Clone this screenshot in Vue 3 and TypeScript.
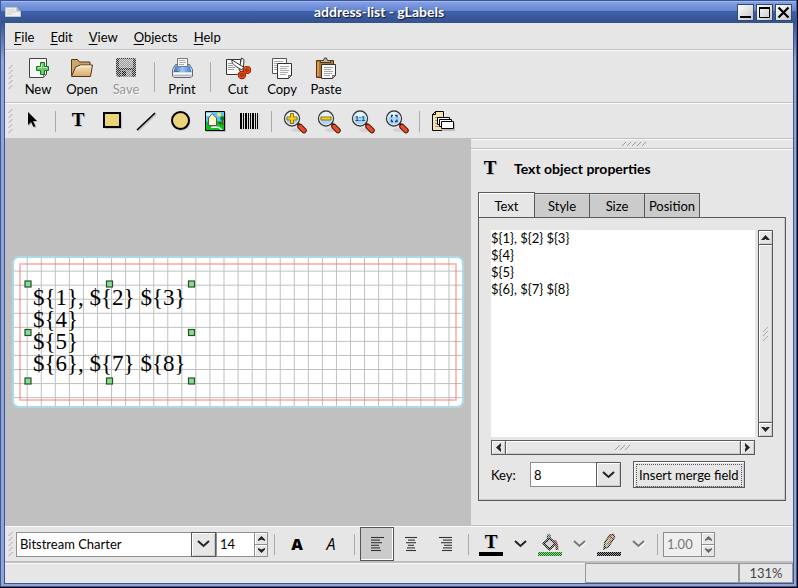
<script setup lang="ts">
import { ref } from 'vue'

const menus = [
  ['F', 'ile'],
  ['E', 'dit'],
  ['V', 'iew'],
  ['O', 'bjects'],
  ['H', 'elp'],
]

const tabs = ['Text', 'Style', 'Size', 'Position']
const activeTab = ref('Text')

const content = ref('${1}, ${2} ${3}\n${4}\n${5}\n${6}, ${7} ${8}')
const keyField = ref('8')
const family = ref('Bitstream Charter')
const fontSize = ref('14')
const lineWidth = ref('1.00')
const alignment = ref('left')

const gridStep = 14.056
const columns = Array.from({ length: 31 }, (_, i) => 13.16 + gridStep * (i + 1))
const rows = Array.from({ length: 10 }, (_, i) => 257.06 + gridStep * (i + 1))
const labelLines = ['${1}, ${2} ${3}', '${4}', '${5}', '${6}, ${7} ${8}']
const handles = [
  [28, 284], [109.5, 284], [191.5, 284],
  [28, 332.5], [191.5, 332.5],
  [28, 381], [109.5, 381], [191.5, 381],
]
const bars = [
  [4, 2], [7, 1], [9, 2], [12, 1], [14, 1], [16, 2], [19, 1], [21, 1],
]
const alignIcons: Record<string, number[][]> = {
  left: [[6, 13], [6, 9], [6, 11], [6, 8], [6, 9], [6, 10]],
  center: [[6, 12], [9, 7], [7, 10], [9, 6], [8, 8], [7, 10]],
  right: [[6, 13], [10, 9], [8, 11], [11, 8], [10, 9], [9, 10]],
}
</script>

<template>
  <div class="desktop">
    <div class="frame">
      <header class="titlebar">
        <svg class="app-icon" width="16" height="10" viewBox="0 0 16 10">
          <path d="M.5.5h11l4 4v5H.5z" fill="#eee" stroke="#c6c6c0" />
          <path d="M2 3h8M2 5h9M2 7h5" stroke="#cfcfcf" />
          <path d="M11.500.5v4h4z" fill="#aaa" />
        </svg>
        <h1>address-list - gLabels</h1>
        <div class="window-buttons">
          <button type="button" aria-label="Minimize">
            <svg width="15" height="15" viewBox="0 0 15 15"><path d="M2 12h11" stroke="#000" stroke-width="2" /></svg>
          </button>
          <button type="button" aria-label="Maximize">
            <svg width="15" height="15" viewBox="0 0 15 15">
              <path d="M2.500 3v9.500h10V3" fill="none" stroke="#000" /><path d="M2 3h11" stroke="#000" stroke-width="2" />
            </svg>
          </button>
          <button type="button" aria-label="Close">
            <svg width="15" height="15" viewBox="0 0 15 15"><path d="M2.500 2.500l10 10M12.500 2.500l-10 10" stroke="#000" stroke-width="2.200" /></svg>
          </button>
        </div>
      </header>

      <div class="body">
        <nav class="menubar">
          <button v-for="m in menus" :key="m[0]" type="button"><u>{{ m[0] }}</u>{{ m[1] }}</button>
        </nav>

        <div class="toolbar main-tools">
          <svg class="grip" width="10" height="28" viewBox="0 0 10 28"><path v-for="n in 5" :key="n" :d="`M3.500 ${n * 5 + 1}l4-4`" stroke="#aaa" /></svg>
          <button type="button" class="labelled">
            <svg class="icon" viewBox="0 0 24 24">
              <path d="M3.500 2.500h17v16l-3 3h-14z" fill="#f6f6f6" stroke="#444" />
              <path d="M20.500 18.500h-3v3z" fill="#ccc" stroke="#777" />
              <path d="M14.500 6.500h4v4h4v4h-4v4h-4v-4h-4v-4h4z" fill="#6ccc6c" stroke="#14781c" />
              <path d="M15.500 8v3.500H12M17.500 11.500H21" fill="none" stroke="#c6f4c0" />
            </svg>
            <span>New</span>
          </button>
          <button type="button" class="labelled">
            <svg class="icon" viewBox="0 0 24 24">
              <defs><linearGradient id="folder" x2="0" y2="1"><stop stop-color="#fbe6c0" /><stop offset="1" stop-color="#d8a868" /></linearGradient></defs>
              <path d="M1.500 19.500v-16h6l2 2.500h10.500v4" fill="#cfa46c" stroke="#4d3820" />
              <path d="M1.500 20.500L5.500 11l5-2h12l-2 11.500z" fill="url(#folder)" stroke="#4d3820" />
              <path d="M6.500 12l4.500-2h10" fill="none" stroke="#fff2d8" />
            </svg>
            <span>Open</span>
          </button>
          <button type="button" class="labelled" disabled>
            <svg class="icon" viewBox="0 0 24 24">
              <defs>
                <pattern id="stipple" width="2" height="2" patternUnits="userSpaceOnUse"><path d="M0 0h1v1H0zM1 1h1v1H1z" fill="#e6e6e6" /></pattern>
              </defs>
              <path d="M2 3l1-1h18l1 1v17l-1 1H4l-2-2z" fill="#303038" />
              <path d="M5 3h14v9H5z" fill="#999" />
              <path d="M7 14h11v7H7z" fill="#888" /><path d="M8 15h4v5H8z" fill="#111" />
              <path d="M2 2h20v19H2z" fill="url(#stipple)" opacity=".8" />
            </svg>
            <span>Save</span>
          </button>
          <i class="sep tall"></i>
          <button type="button" class="labelled">
            <svg class="icon" viewBox="0 0 24 24">
              <defs><linearGradient id="ink" x2="1"><stop stop-color="#2f6fd0" /><stop offset=".5" stop-color="#9cc8f6" /><stop offset="1" stop-color="#3b79d8" /></linearGradient></defs>
              <path d="M5.500 8.500h14l3 5v6.500l-1.500 1.500H4L2.500 20v-6.500z" fill="#dcdce4" stroke="#666" />
              <path d="M5.500 9.500h14l2 6.500h-18z" fill="url(#ink)" />
              <path d="M7.500 10.500v-8h10v8z" fill="#fafafa" stroke="#777" />
              <path d="M9 4.500h6M9 6.500h7M9 8.500h5" stroke="#aaa" />
              <path d="M3 17.500h19" stroke="#fff" /><path d="M5 15.500h2" stroke="#e03030" /><path d="M7 15.500h2" stroke="#30a030" />
              <path d="M4 19.500h17" stroke="#b6b6c0" />
            </svg>
            <span>Print</span>
          </button>
          <i class="sep tall"></i>
          <button type="button" class="labelled">
            <svg class="icon" viewBox="0 0 24 24">
              <path d="M.5 3.500h14v12l-3 3H.5z" fill="#fafafa" stroke="#333" />
              <path d="M2 7.500h4M2 9.500h5M2 11.500h7M2 13.500h6" stroke="#999" />
              <path d="M15.500 2l2.500 1.500L17 17l-4-3z" fill="#fff" stroke="#333" />
              <path d="M6 4c-.5 3 1 5 9 9.500l4-1.500z" fill="#fff" stroke="#333" />
              <circle cx="16" cy="19" r="2.500" fill="#e0a090" stroke="#6c1404" stroke-width="3.400" />
              <circle cx="21" cy="14" r="2.400" fill="#e0a090" stroke="#6c1404" stroke-width="3.400" />
              <circle cx="16" cy="19" r="2.600" fill="none" stroke="#ec480c" stroke-width="1.800" />
              <circle cx="21" cy="14" r="2.500" fill="none" stroke="#ec480c" stroke-width="1.800" />
            </svg>
            <span>Cut</span>
          </button>
          <button type="button" class="labelled">
            <svg class="icon" viewBox="0 0 24 24">
              <path d="M2.500 2.500h14v15h-14z" fill="#fafafa" stroke="#555" />
              <path d="M4 5.500h9M4 7.500h10M4 9.500h4M4 11.500h3M4 13.500h4" stroke="#aaa" />
              <path d="M7.500 7.500h14v12l-3 3h-11z" fill="#fafafa" stroke="#333" />
              <path d="M21.500 19.500h-3v3z" fill="#bbb" stroke="#444" stroke-width=".7" />
              <path d="M10 10.500h9M10 12.500h7M10 14.500h9M10 16.500h8M10 18.500h6" stroke="#aaa" />
            </svg>
            <span>Copy</span>
          </button>
          <button type="button" class="labelled">
            <svg class="icon" viewBox="0 0 24 24">
              <path d="M2.500 4.500h17v17h-17z" fill="#b87428" stroke="#5a3008" />
              <path d="M4 6v14" stroke="#d89a50" stroke-width="2" />
              <path d="M6.500 6.500V4.500h3l1-2.500h2l1 2.500h3v2z" fill="#b4b4ac" stroke="#3c3c38" />
              <path d="M7.500 8.500h14v11l-3 3h-11z" fill="#fafafa" stroke="#333" />
              <path d="M21.500 19.500h-3v3z" fill="#bbb" stroke="#444" stroke-width=".7" />
              <path d="M10 11.500h9M10 13.500h7M10 15.500h9M10 17.500h8M10 19.500h6" stroke="#aaa" />
            </svg>
            <span>Paste</span>
          </button>
        </div>

        <div class="toolbar">
          <svg class="grip" width="10" height="28" viewBox="0 0 10 28"><path v-for="n in 5" :key="n" :d="`M3.500 ${n * 5 + 1}l4-4`" stroke="#aaa" /></svg>
          <button type="button" class="tool" aria-label="Select">
            <svg class="icon" viewBox="0 0 24 24">
              <path d="M9 4v13l3-3 2.500 5.500 2-1-2.500-5.500h4z" fill="#bbb" />
              <path d="M8 3v13l3-3 2.500 5 2-1-2.500-5h4z" fill="#000" />
            </svg>
          </button>
          <i class="sep"></i>
          <button type="button" class="tool" aria-label="Text">
            <svg class="icon" viewBox="0 0 24 24">
              <text x="13" y="18" class="glyph-t faded">T</text>
              <text x="12" y="17" class="glyph-t">T</text>
            </svg>
          </button>
          <button type="button" class="tool" aria-label="Box">
            <svg class="icon" viewBox="0 0 24 24">
              <path d="M5 5h17v15H5z" fill="#c4c4c4" /><path d="M4 4h16v14H4z" fill="#ecd47c" stroke="#000" stroke-width="2" />
            </svg>
          </button>
          <button type="button" class="tool" aria-label="Line">
            <svg class="icon" viewBox="0 0 24 24">
              <path d="M4 22L22 5" stroke="#c4c4c4" stroke-width="2" /><path d="M3 21L21 4" stroke="#000" stroke-width="1.600" />
            </svg>
          </button>
          <button type="button" class="tool" aria-label="Ellipse">
            <svg class="icon" viewBox="0 0 24 24">
              <circle cx="13.500" cy="13" r="9" fill="#c4c4c4" /><circle cx="12.500" cy="11.500" r="8.500" fill="#ecd47c" stroke="#000" stroke-width="2" />
            </svg>
          </button>
          <button type="button" class="tool" aria-label="Image">
            <svg class="icon" viewBox="0 0 24 24">
              <path d="M4 4h20v19H4z" fill="#bbb" />
              <path d="M3.500 2.500h19v19h-19z" fill="#5cc4fc" />
              <path d="M4 4h6v3H4z" fill="#e4f8ff" />
              <path d="M4 13l6-2 12 2v8H4z" fill="#0cc01c" />
              <path d="M6.500 16.500V9l3.500-4.500L14.500 9v7.500z" fill="#fcf4c0" stroke="#555" />
              <path d="M9 12h2v4H9z" fill="#fff" />
              <circle cx="17" cy="5.500" r="2" fill="#fce83c" />
              <path d="M9 18.500l3-.5 5 .5 3 2.500" fill="none" stroke="#fff" stroke-width="1.500" />
              <circle cx="20.500" cy="9.500" r="2.300" fill="#0a7a14" /><path d="M20.500 11v5" stroke="#803c14" stroke-width="1.500" />
              <circle cx="18" cy="14" r="1.500" fill="#0a7a14" />
              <path d="M3.500 2.500h19v19h-19z" fill="none" stroke="#000" />
            </svg>
          </button>
          <button type="button" class="tool" aria-label="Barcode">
            <svg class="icon" viewBox="0 0 24 24">
              <path d="M5 5h19v16H5z" fill="#dadada" />
              <rect v-for="b in bars" :key="b[0]" :x="b[0]" y="4" :width="b[1]" height="16" fill="#000" />
            </svg>
          </button>
          <i class="sep"></i>
          <button v-for="kind in ['in', 'out', 'one', 'fit']" :key="kind" type="button" class="tool" :aria-label="'Zoom ' + kind">
            <svg class="icon" viewBox="0 0 24 24">
              <ellipse cx="16" cy="21" rx="7" ry="2" fill="#d2d2d2" />
              <path d="M15 14l4 4" stroke="#333" stroke-width="3" />
              <path d="M18 17.500l4 4" stroke="#5c1408" stroke-width="5.500" stroke-linecap="round" />
              <path d="M18 17.500l4 4" stroke="#e4502c" stroke-width="3.500" stroke-linecap="round" />
              <circle cx="10" cy="9.500" r="7.500" fill="#a4d8fc" stroke="#3c3c3c" stroke-width="1.400" />
              <circle cx="10" cy="9.500" r="6.300" fill="none" stroke="#e8e8e8" />
              <path d="M5 8a5 5 0 0 1 10 0z" fill="#e2f4ff" />
              <path v-if="kind === 'in'" d="M8.500 4.500h3v3.500H15v3h-3.500v3.500h-3V11H5V8h3.500z" fill="#fcd018" stroke="#94700c" />
              <path v-if="kind === 'out'" d="M5 8h10v3H5z" fill="#fcd018" stroke="#94700c" />
              <text v-if="kind === 'one'" x="10" y="12" class="ratio">1:1</text>
              <path v-if="kind === 'fit'" d="M7.500 8.500v-2H9M11 6.500h2v2M13 10.500v2h-2M9 12.500H7.500v-2" fill="none" stroke="#123c78" stroke-width="1.300" />
            </svg>
          </button>
          <i class="sep"></i>
          <button type="button" class="tool" aria-label="Merge properties">
            <svg class="icon wide" viewBox="0 0 26 24">
              <path d="M3.500 5.500l3-3h8v19h-11z" fill="#f4e4b0" stroke="#000" />
              <path d="M3.500 5.500h3v-3z" fill="#fff" stroke="#000" />
              <path d="M6 8.500h6M6 11.500h3M6 14.500h3M6 17.500h5" stroke="#a89868" />
              <path d="M8.500 8.500h12v7h-12z" fill="#fff" stroke="#000" />
              <path d="M10.500 10.500h12v7h-12z" fill="#fff" stroke="#000" />
              <path d="M13 14h13v8H13z" fill="#bbb" />
              <path d="M12.500 12.500h12v7h-12z" fill="#fff" stroke="#000" />
            </svg>
          </button>
        </div>

        <main class="work">
          <section class="canvas">
            <svg class="label" width="452" height="152" viewBox="12 256 452 152">
              <rect x="13" y="257" width="450" height="150" rx="6" fill="#fff" />
              <path v-for="x in columns" :key="'c' + x" :d="`M${x} 258V406`" stroke="#c0c0c0" />
              <path v-for="y in rows" :key="'r' + y" :d="`M14 ${y}H462`" stroke="#c0c0c0" />
              <rect x="20" y="264" width="436" height="136" fill="none" stroke="#ff5050" stroke-opacity=".5" stroke-width="1.500" />
              <rect x="13" y="257" width="450" height="150" rx="6" fill="none" stroke="#add8e6" stroke-width="2" />
              <text class="label-text" y="283"><tspan v-for="line in labelLines" :key="line" x="33" dy="22">{{ line }}</tspan></text>
              <rect v-for="h in handles" :key="h.join()" :x="h[0] - 3" :y="h[1] - 3" width="6" height="6" fill="#84e08c" stroke="#2c4c30" stroke-width="1.200" />
            </svg>
          </section>

          <aside class="panel">
            <div class="dock-grip">
              <svg width="26" height="6" viewBox="0 0 26 6"><path v-for="n in 5" :key="n" :d="`M${n * 5 - 4} 5l4-4`" stroke="#999" /></svg>
            </div>
            <div class="panel-head">
              <svg class="icon" viewBox="0 0 24 24">
                <text x="13" y="18" class="glyph-t faded">T</text>
                <text x="12" y="17" class="glyph-t">T</text>
              </svg>
              <h2>Text object properties</h2>
            </div>
            <div class="tabs" role="tablist">
              <button v-for="t in tabs" :key="t" type="button" role="tab" :aria-selected="t === activeTab" :class="{ on: t === activeTab }" @click="activeTab = t">{{ t }}</button>
            </div>
            <div class="page">
              <div class="editor">
                <textarea v-model="content" aria-label="Text" spellcheck="false"></textarea>
                <div class="scroll vertical">
                  <button type="button" aria-label="Scroll up"><svg width="9" height="9" viewBox="0 0 9 9"><path d="M4.500 2L9 7H6L4.500 6 3 7H0z" fill="#222" /></svg></button>
                  <div class="thumb"><svg width="7" height="16" viewBox="0 0 7 16"><path d="M1 6l5-5M1 10l5-5M1 15l5-5" stroke="#aaa" /></svg></div>
                  <button type="button" aria-label="Scroll down"><svg width="9" height="9" viewBox="0 0 9 9"><path d="M4.500 7L0 2h3l1.500 1L6 2h3z" fill="#222" /></svg></button>
                </div>
                <div class="scroll horizontal">
                  <button type="button" aria-label="Scroll left"><svg width="9" height="9" viewBox="0 0 9 9"><path d="M2 4.500L7 0v3L6 4.500 7 6v3z" fill="#222" /></svg></button>
                  <div class="thumb"><svg width="16" height="7" viewBox="0 0 16 7"><path d="M0 6l5-5M5 6l5-5M10 6l5-5" stroke="#999" /></svg></div>
                  <button type="button" aria-label="Scroll right"><svg width="9" height="9" viewBox="0 0 9 9"><path d="M7 4.500L2 9V6l1-1.500L2 3V0z" fill="#222" /></svg></button>
                </div>
              </div>
              <div class="merge-row">
                <label for="key">Key:</label>
                <div class="combo key-combo">
                  <select id="key" v-model="keyField"><option v-for="n in 8" :key="n">{{ n }}</option></select>
                  <span class="drop"><svg width="13" height="8" viewBox="0 0 13 8"><path d="M1 1l5.500 5L12 1" fill="none" stroke="#222" stroke-width="2" /></svg></span>
                </div>
                <button type="button" class="insert"><span>Insert merge field</span></button>
              </div>
            </div>
          </aside>
        </main>

        <div class="toolbar format">
          <svg class="grip" width="10" height="28" viewBox="0 0 10 28"><path v-for="n in 5" :key="n" :d="`M3.500 ${n * 5 + 1}l4-4`" stroke="#aaa" /></svg>
          <div class="combo font-combo">
            <select v-model="family" aria-label="Font family"><option>Bitstream Charter</option><option>Courier</option></select>
            <span class="drop"><svg width="13" height="8" viewBox="0 0 13 8"><path d="M1 1l5.500 5L12 1" fill="none" stroke="#222" stroke-width="2" /></svg></span>
          </div>
          <div class="spin">
            <input v-model="fontSize" aria-label="Font size" />
            <button type="button" aria-label="Larger"><svg width="7" height="5" viewBox="0 0 7 5"><path d="M3.500 0L7 3.500V5L3.500 3.500 0 5V3.500z" fill="#222" /></svg></button>
            <button type="button" aria-label="Smaller"><svg width="7" height="5" viewBox="0 0 7 5"><path d="M3.500 5L0 1.500V0l3.500 1.500L7 0v1.500z" fill="#222" /></svg></button>
          </div>
          <i class="sep"></i>
          <button type="button" class="tool" aria-label="Bold"><svg class="icon" viewBox="0 0 24 24"><text x="12" y="18" class="glyph-a bold">A</text></svg></button>
          <button type="button" class="tool" aria-label="Italic"><svg class="icon" viewBox="0 0 24 24"><text x="12" y="18" class="glyph-a slanted">A</text></svg></button>
          <i class="sep"></i>
          <button v-for="(lines, name) in alignIcons" :key="name" type="button" class="tool" :class="{ pressed: alignment === name }" :aria-label="'Align ' + name" @click="alignment = String(name)">
            <svg class="icon" viewBox="0 0 24 24">
              <path v-for="(l, i) in lines" :key="i" :d="`M${l[0]} ${5.500 + i * 2.600}h${l[1]}`" stroke="#333" stroke-width="1.100" />
            </svg>
          </button>
          <i class="sep"></i>
          <button type="button" class="tool" aria-label="Text color">
            <svg class="icon" viewBox="0 0 24 24">
              <text x="13" y="17" class="glyph-t faded">T</text><text x="12" y="16" class="glyph-t">T</text>
              <path d="M0 20h24v4H0z" fill="#000" />
            </svg>
          </button>
          <button type="button" class="arrow" aria-label="Text color menu"><svg width="13" height="8" viewBox="0 0 13 8"><path d="M1 1l5.500 5L12 1" fill="none" stroke="#222" stroke-width="2" /></svg></button>
          <button type="button" class="tool" aria-label="Fill color" disabled>
            <svg class="icon" viewBox="0 0 24 24">
              <path d="M5.500 11.500l6-5.500 6 5.500-6 6z" fill="#ccc" stroke="#000" stroke-width="1.800" />
              <path d="M9.500 10V3.500l1-1 1.500 1V8" fill="none" stroke="#222" stroke-width="1.300" />
              <path d="M14 9c4 0 5 2.500 5 9" fill="none" stroke="#602824" stroke-width="2.800" />
              <path d="M0 20h24v4H0z" fill="#0a840a" />
              <path d="M0 2h24v22H0z" fill="url(#stipple)" opacity=".7" />
            </svg>
          </button>
          <button type="button" class="arrow off" aria-label="Fill color menu" disabled><svg width="14" height="9" viewBox="0 0 14 9"><path d="M2 2l5.500 5L13 2" fill="none" stroke="#fff" stroke-width="2" /><path d="M1 1l5.500 5L12 1" fill="none" stroke="#777" stroke-width="2" /></svg></button>
          <button type="button" class="tool" aria-label="Line color" disabled>
            <svg class="icon" viewBox="0 0 24 24">
              <path d="M7 17l1-7 5-7 3.500-.5 1 3-6 9z" fill="#d8b890" stroke="#222" stroke-width="1.400" />
              <path d="M12 4l4 3" stroke="#a03028" stroke-width="2" /><path d="M10 13l4-6" stroke="#9a7038" stroke-width="1.500" />
              <path d="M7 17l1-3 2 1.500z" fill="#111" />
              <path d="M0 20h24v4H0z" fill="#000" />
              <path d="M0 2h24v22H0z" fill="url(#stipple)" opacity=".7" />
            </svg>
          </button>
          <button type="button" class="arrow off" aria-label="Line color menu" disabled><svg width="14" height="9" viewBox="0 0 14 9"><path d="M2 2l5.500 5L13 2" fill="none" stroke="#fff" stroke-width="2" /><path d="M1 1l5.500 5L12 1" fill="none" stroke="#777" stroke-width="2" /></svg></button>
          <i class="sep"></i>
          <div class="spin off">
            <input v-model="lineWidth" aria-label="Line width" disabled />
            <button type="button" aria-label="Wider" disabled><svg width="7" height="5" viewBox="0 0 7 5"><path d="M3.500 0L7 3.500V5L3.500 3.500 0 5V3.500z" fill="#666" /></svg></button>
            <button type="button" aria-label="Thinner" disabled><svg width="7" height="5" viewBox="0 0 7 5"><path d="M3.500 5L0 1.500V0l3.500 1.500L7 0v1.500z" fill="#666" /></svg></button>
          </div>
        </div>

        <footer class="status">
          <div class="cell message"></div>
          <div class="cell zoom">131%</div>
        </footer>
      </div>
    </div>
  </div>
</template>

<style>
body {
  background: #000;
}
</style>

<style scoped>
* {
  box-sizing: border-box;
}

.desktop {
  height: 100vh;
  padding: 0 1px 1px 0;
  background: #000;
  color: #000;
  font: 13px/16px Lato, "Open Sans", sans-serif;
}

button,
select,
input,
textarea {
  margin: 0;
  padding: 0;
  border: 0;
  border-radius: 0;
  background: none;
  color: inherit;
  font: inherit;
  appearance: none;
  outline: 0;
}

svg {
  display: block;
  flex: none;
}

.frame {
  display: flex;
  flex-direction: column;
  height: 100%;
  border: solid #3c5898;
  border-width: 0 1px 1px;
  background: linear-gradient(#3a5690 23px, #93a5d2 60px);
}

.titlebar {
  display: grid;
  grid-template-columns: 16px 1fr 56px;
  align-items: center;
  height: 23px;
  padding: 0 3px 0 4px;
  border-top: 1px solid #38549a;
  background: linear-gradient(#a4b8ec 1px, #84a0e4 1px, #6484d0 10px, #3f60ae 10px, #36528c);
}

.titlebar h1 {
  margin: 0;
  color: #fff;
  font-size: 14px;
  text-align: center;
  text-shadow: 1px 1px 1px #101c38;
}

.window-buttons {
  display: flex;
  gap: 2px;
}

.window-buttons button {
  width: 17px;
  height: 17px;
  border: 1px solid #33496f;
  background: linear-gradient(135deg, #fff, #c4c4c4);
}

.body {
  display: flex;
  flex: 1;
  flex-direction: column;
  min-height: 0;
  margin: 0 2px 2px 3px;
  border: solid #3a5698;
  border-width: 0 1px 1px;
  background: #e6e6e6;
}

.menubar {
  display: flex;
  flex: none;
  height: 27px;
  padding-left: 1px;
  border-bottom: 1px solid #c0c0c0;
}

.menubar button {
  padding: 1px 8px 0;
}

.menubar u {
  text-underline-offset: 2px;
}

.toolbar {
  display: flex;
  flex: none;
  align-items: center;
  height: 36px;
  border-top: 1px solid #fafafa;
  border-bottom: 1px solid #c0c0c0;
}

.main-tools {
  height: 53px;
}

.main-tools .grip,
.format .grip {
  margin-right: 1px;
}

.labelled {
  display: flex;
  flex-direction: column;
  align-items: center;
  gap: 1px;
  width: 44px;
}

.labelled:disabled {
  color: #969696;
  text-shadow: 1px 1px 0 #fff;
}

.icon {
  width: 24px;
  height: 24px;
  overflow: visible;
}

.icon.wide {
  width: 26px;
}

.sep {
  width: 12px;
  height: 21px;
  background: linear-gradient(#aaa, #aaa) center / 1px 100% no-repeat;
}

.sep.tall {
  height: 30px;
}

.tool {
  display: flex;
  align-items: center;
  justify-content: center;
  width: 34px;
  height: 34px;
}

.pressed {
  border: 1px solid #555;
  background: #cbcbcb;
  box-shadow: inset -1px -1px #fff;
}

.arrow {
  display: flex;
  align-items: center;
  justify-content: center;
  width: 25px;
  height: 34px;
}

.glyph-t {
  font: bold 19px "Liberation Serif", serif;
  text-anchor: middle;
}

.faded {
  fill: #c0c0c0;
}

.glyph-a {
  font: 16px "Open Sans", sans-serif;
  text-anchor: middle;
}

.bold {
  font-weight: 800;
}

.slanted {
  font-style: italic;
}

.ratio {
  fill: #123c78;
  font: bold 7px "Liberation Sans", sans-serif;
  text-anchor: middle;
}

.work {
  display: flex;
  flex: 1;
  min-height: 0;
}

.canvas {
  display: flex;
  flex: 1;
  align-items: center;
  justify-content: center;
  min-width: 0;
  padding-bottom: 1px;
  overflow: hidden;
  background: #c0c0c0;
}

.label-text {
  font: 23px "Liberation Serif", serif;
}

.panel {
  display: flex;
  flex: 0 0 322px;
  flex-direction: column;
  padding: 0 7px 24px;
  border-top: 1px solid #fafafa;
  border-bottom: 1px solid #c0c0c0;
}

.dock-grip {
  display: flex;
  align-items: center;
  justify-content: center;
  height: 9px;
  margin: 0 -7px;
  padding-left: 4px;
  border-bottom: 1px solid #c0c0c0;
  box-shadow: 0 1px #fafafa;
}

.panel-head {
  display: flex;
  align-items: center;
  gap: 12px;
  height: 43px;
  padding-bottom: 4px;
}

.panel-head h2 {
  margin: 0;
  font-size: 14px;
}

.tabs {
  display: flex;
  align-items: flex-end;
  height: 26px;
  margin-bottom: -1px;
}

.tabs button {
  width: 56px;
  height: 25px;
  margin-left: -1px;
  padding-top: 1px;
  border: 1px solid #5a5a5a;
  background: #cbcbcb;
  box-shadow: inset 0 1px #dedede;
}

.tabs .on {
  width: 57px;
  height: 26px;
  margin-left: 0;
  border-bottom-color: #e6e6e6;
  background: #e6e6e6;
  box-shadow: inset 1px 1px #fff;
}

.page {
  display: flex;
  flex: 1;
  flex-direction: column;
  gap: 6px;
  min-height: 0;
  padding: 12px;
  border: 1px solid #5a5a5a;
  box-shadow: inset -1px -1px #c8c8c8;
}

.editor {
  display: grid;
  flex: 1;
  grid-template-columns: 1fr 15px;
  grid-template-rows: 1fr 15px;
  gap: 3px;
  min-height: 0;
}

.editor textarea {
  width: 100%;
  height: 100%;
  background: #fff;
  line-height: 17px;
  overflow: hidden;
  resize: none;
}

.scroll {
  display: flex;
  border: 1px solid #5a5a5a;
}

.vertical {
  flex-direction: column;
}

.scroll button,
.thumb {
  display: flex;
  align-items: center;
  justify-content: center;
  box-shadow: inset 1px 1px #fff, inset -1px -1px #ccc;
}

.scroll button {
  width: 13px;
  height: 13px;
}

.thumb {
  flex: 1;
}

.vertical .thumb {
  border: solid #5a5a5a;
  border-width: 1px 0;
}

.horizontal .thumb {
  border: solid #5a5a5a;
  border-width: 0 1px;
}

.merge-row {
  display: flex;
  align-items: center;
  height: 27px;
}

.merge-row label {
  width: 39px;
}

.combo {
  display: grid;
  grid-template-columns: 1fr 25px;
  height: 25px;
}

.combo select {
  grid-area: 1 / 1 / 2 / 3;
  padding-left: 3px;
  border: 1px solid #8e8e8e;
  background: #fff;
}

.drop {
  display: flex;
  grid-area: 1 / 2;
  align-items: center;
  justify-content: center;
  border: 1px solid #5a5a5a;
  background: #e6e6e6;
  box-shadow: inset 1px 1px #fff, inset -1px -1px #ccc;
  pointer-events: none;
}

.key-combo {
  width: 91px;
}

.font-combo {
  width: 200px;
}

.insert {
  height: 27px;
  margin-left: 12px;
  padding: 2px;
  border: 1px solid #5a5a5a;
  box-shadow: inset 1px 1px #fff, inset -1px -1px #ccc;
}

.insert span {
  display: block;
  padding: 1px 2px;
  border: 1px dotted #555;
  line-height: 19px;
}

.spin {
  display: grid;
  grid-template-rows: 1fr 1fr;
  grid-template-columns: 1fr 13px;
  width: 52px;
  height: 25px;
  border: 1px solid #8e8e8e;
}

.spin input {
  grid-row: 1 / 3;
  width: 100%;
  min-width: 0;
  padding-left: 3px;
  background: #fff;
}

.spin button {
  display: flex;
  align-items: center;
  justify-content: center;
  border-left: 1px solid #8e8e8e;
  box-shadow: inset 1px 1px #fff;
}

.spin button + button {
  border-top: 1px solid #8e8e8e;
}

.spin.off input {
  background: #efefef;
  color: #777;
}

.status {
  display: flex;
  flex: none;
  justify-content: flex-end;
  height: 21px;
  border-top: 1px solid #c0c0c0;
  box-shadow: inset 0 1px #fafafa;
}

.cell {
  border: 1px solid #999;
}

.message {
  width: 154px;
}

.zoom {
  width: 54px;
  color: #444;
  line-height: 19px;
  text-align: center;
}
</style>
